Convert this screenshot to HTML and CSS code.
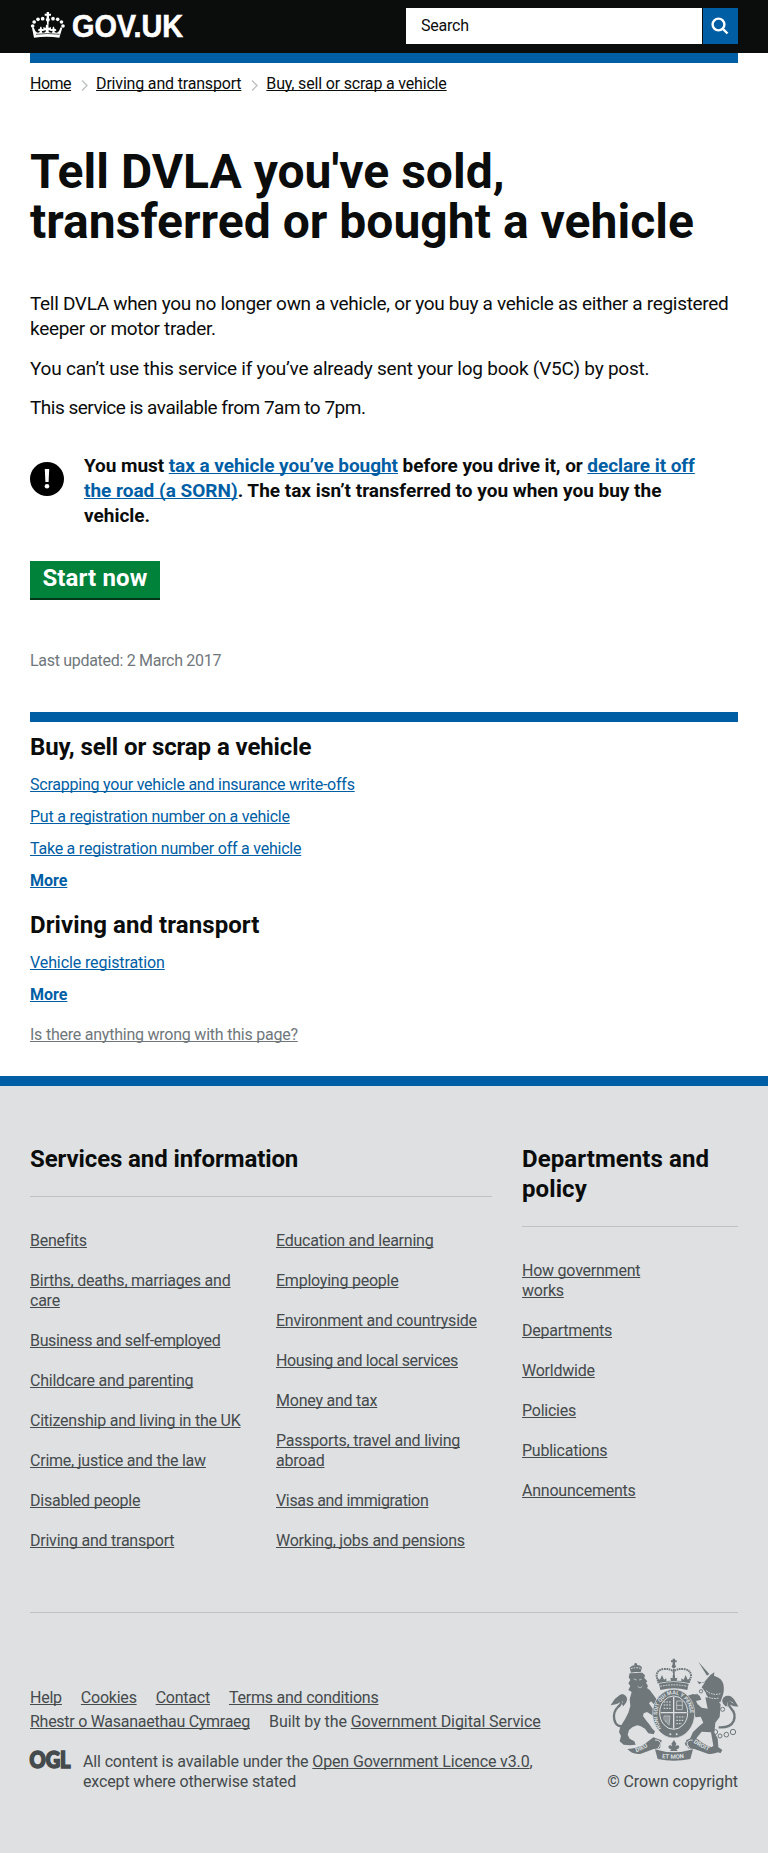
FILE: index.html
```html
<!DOCTYPE html>
<html lang="en">
<head>
<meta charset="utf-8">
<title>Tell DVLA you've sold, transferred or bought a vehicle - GOV.UK</title>
<link rel="stylesheet" href="styles.css">
</head>
<body>
<header class="header">
  <a class="logo" href="#">
    <svg class="crown" viewBox="6 12 106 78" fill="#fff">
      <path d="M55 12h7v5h6v6h-6v7h-7v-7h-6v-6h6z"/>
      <circle cx="58.500" cy="35" r="6"/><path d="M56 38h5v12h-5z"/>
      <circle cx="43" cy="32" r="5.500"/><circle cx="29" cy="34" r="5.500"/><circle cx="17.500" cy="42" r="5.500"/><circle cx="13" cy="54" r="5.500"/>
      <circle cx="74" cy="32" r="5.500"/><circle cx="88" cy="34" r="5.500"/><circle cx="99.500" cy="42" r="5.500"/><circle cx="104" cy="54" r="5.500"/>
      <path d="M11 59l5-1 5 11q5 7 12 4l2-5q-4 3-6-1 0-5 5-4l2-7 3 0 2 7q5-1 5 4-2 4-6 1l2 6q6 1 10-3v-5l-7 3v-12l7 3 1-10h7l1 10 7-3v12l-7-3v5q4 4 10 3l2-6q-4 3-6-1 0-5 5-4l2-7h3l2 7q5-1 5 4-2 4-6 1l2 5q7 3 12-4l5-11 5 1-9 30q-38-5-76 0z"/>
      <path d="M23 79q35-5 71 0" fill="none" stroke="#0b0c0c" stroke-width="2"/>
    </svg>
    <svg class="wordmark" viewBox="0 0 114 34"><text x="0" y="27" textLength="111" lengthAdjust="spacingAndGlyphs">GOV.UK</text></svg>
  </a>
  <form class="search">
    <span class="search-input">Search</span>
    <span class="search-button"><svg viewBox="0 0 18 18"><circle cx="7.500" cy="7.500" r="5.900"/><path d="M11.500 11.500l5 5"/></svg></span>
  </form>
</header>
<div class="wrap">
  <div class="bar"></div>
  <nav class="crumbs">
    <a href="#">Home</a>
    <svg viewBox="0 0 7 11"><path d="M1 .5l5 5-5 5"/></svg>
    <a href="#">Driving and transport</a>
    <svg viewBox="0 0 7 11"><path d="M1 .5l5 5-5 5"/></svg>
    <a href="#">Buy, sell or scrap a vehicle</a>
  </nav>
  <main>
    <h1>Tell DVLA you've sold,<br>transferred or bought a vehicle</h1>
    <div class="intro">
      <p>Tell DVLA when you no longer own a vehicle, or you buy a vehicle as either a registered keeper or motor trader.</p>
      <p class="restriction">You can’t use this service if you’ve already sent your log book (V5C) by post.</p>
      <p class="hours">This service is available from 7am to 7pm.</p>
    </div>
    <div class="warning">
      <svg viewBox="0 0 34 34"><circle cx="17" cy="17" r="17"/><path d="M14.800 7h4.400l-.6 13h-3.200z" fill="#fff"/><circle cx="17" cy="24.300" r="2.300" fill="#fff"/></svg>
      <p><span class="lead">You must <a href="#">tax a vehicle you’ve bought</a> before you drive it, or </span><a href="#"><span class="lead">declare it off</span><br>the road (a SORN)</a>. The tax isn’t transferred to you when you buy the<br>vehicle.</p>
    </div>
    <a class="start" href="#">Start now</a>
    <p class="updated">Last updated: 2 March 2017</p>
  </main>
  <aside class="related">
    <div class="bar"></div>
    <h2>Buy, sell or scrap a vehicle</h2>
    <ul>
      <li><a href="#">Scrapping your vehicle and insurance write-offs</a></li>
      <li><a href="#">Put a registration number on a vehicle</a></li>
      <li><a href="#">Take a registration number off a vehicle</a></li>
      <li class="more"><a href="#">More</a></li>
    </ul>
    <h2 class="loose">Driving and transport</h2>
    <ul>
      <li class="loose"><a href="#">Vehicle registration</a></li>
      <li class="more"><a href="#">More</a></li>
    </ul>
  </aside>
  <a class="report" href="#">Is there anything wrong with this page?</a>
</div>
<footer class="footer">
  <div class="columns">
    <section class="services">
      <h2>Services and information</h2>
      <div class="lists">
        <ul>
          <li><a href="#">Benefits</a></li>
          <li><a href="#">Births, deaths, marriages and<br>care</a></li>
          <li class="tight"><a href="#">Business and self-employed</a></li>
          <li><a href="#">Childcare and parenting</a></li>
          <li><a href="#">Citizenship and living in the UK</a></li>
          <li><a href="#">Crime, justice and the law</a></li>
          <li><a href="#">Disabled people</a></li>
          <li><a href="#">Driving and transport</a></li>
        </ul>
        <ul>
          <li><a href="#">Education and learning</a></li>
          <li><a href="#">Employing people</a></li>
          <li><a href="#">Environment and countryside</a></li>
          <li class="tight"><a href="#">Housing and local services</a></li>
          <li><a href="#">Money and tax</a></li>
          <li><a href="#">Passports, travel and living<br>abroad</a></li>
          <li class="tight"><a href="#">Visas and immigration</a></li>
          <li><a href="#">Working, jobs and pensions</a></li>
        </ul>
      </div>
    </section>
    <section class="departments">
      <h2 class="loose">Departments and<br>policy</h2>
      <ul>
        <li><a href="#">How government<br>works</a></li>
        <li><a href="#">Departments</a></li>
        <li><a href="#">Worldwide</a></li>
        <li><a href="#">Policies</a></li>
        <li><a href="#">Publications</a></li>
        <li><a href="#">Announcements</a></li>
      </ul>
    </section>
  </div>
  <div class="meta">
    <div class="meta-left">
      <div class="meta-row first"><a href="#">Help</a><a href="#">Cookies</a><a href="#">Contact</a><a href="#">Terms and conditions</a></div>
      <div class="meta-row second"><a href="#">Rhestr o Wasanaethau Cymraeg</a><span class="credit">Built by the <a href="#">Government Digital Service</a></span></div>
      <div class="licence">
        <svg class="ogl" viewBox="0 0 44 28"><text x="0.500" y="20.500" textLength="41" lengthAdjust="spacingAndGlyphs">OGL</text></svg>
        <p>All content is available under the <a href="#">Open Government Licence v3.0</a>,<br>except where otherwise stated</p>
      </div>
    </div>
    <div class="copyright">
      <svg class="crest" viewBox="13 16 378 309">
        <defs>
          <path id="garter" d="M162 229A49 62 0 1 1 234 229"/>
          <path id="left-scroll" d="M80 300Q110 292 142 268"/>
          <path id="right-scroll" d="M252 266Q284 290 320 301"/>
          <path id="mid-scroll" d="M154 314Q198 323 243 314"/>
        </defs>
        <g class="ink">
          <!-- crown -->
          <path d="M195 18h7v5h5v6h-5v8h-7v-8h-5v-6h5z"/><circle cx="198.500" cy="41" r="6"/>
          <path d="M153 92L147 72Q146 52 168 49Q188 47 197 57Q208 47 228 49Q251 52 250 72L243 92" class="beads"/>
          <path d="M196 48h5v27h-5z"/>
          <path d="M153 91l-4-15 8 5 6-14 6 14 7-4 0 8 14-1-2-9 7 2v-9h7v9l7-2-2 9 14 1 0-8 7 4 6-14 6 14 8-5-5 15q-43-10-90 0z"/>
          <path d="M154 93q44-10 89 0l-4 19q-40-10-81 0z"/>
          <path d="M158 101q40-9 81 0" class="cut dash"/>
          <!-- lion -->
          <path d="M70 60L66 45Q72 37 84 37Q98 36 103 44L99 59Q84 56 70 60Z"/><circle cx="84" cy="35" r="4"/><path d="M70 48q14-5 29-1" class="cut dash"/>
          <path d="M66 62L104 60L112 68L110 76L119 86L115 90L121 100L118 106L126 112L138 128L144 136L150 148L146 162L138 154L130 146L124 152L132 164L148 182L150 196L142 199L134 188L118 178L108 182L106 190L116 204L126 216L134 228L142 236L138 245L122 242L112 228L98 220L88 218L74 224L64 232L60 246L66 258L80 266L84 276L66 278L48 276L36 266L40 250L34 238L38 222L52 200L62 180L68 160L66 140L72 118L62 112L68 100L62 92L68 82L63 74Z"/>
          <path d="M78 79l9 3M94 82l8-2M90 101l7 5 7-5" class="cut fine"/>
          <path d="M45 157Q54 144 46 136Q33 130 22 144L16 153Q31 151 38 142Q45 151 31 163Q15 178 20 201Q26 227 54 220" class="tail"/>
          <path d="M22 147q6-20 23-23 20 8 10 26l-10 12q5-21-9-19z"/>
          <!-- unicorn -->
          <path d="M272 27l33 37-7 5zM288 90l20-23 12-8-1 10q24 7 28 25 4 19-2 35l-7 20-34-4-11-27-11-14 10-15-8-1-9 7-7-9z"/>
          <path d="M293 134l36 8 10 13-3 38-13 17-3 30 10 17 2 27 12 8-5 9-29-6-2-8 9-8-7-40-28-2-16 20-8 12-10 10h-14l-3-9 13-5 12-27 19-18 12-10-8-18-15 2-7-14 3-9-13-9-1-17-10-8 2-7 18-6 20 5 5 12-16 4 5 10 12 10 18 3z"/>
          <path d="M356 159Q342 147 351 136Q366 127 377 143L386 158Q373 158 365 148Q360 155 370 167Q386 183 378 205Q369 226 333 224" class="tail"/>
          <path d="M383 154q-6-18-25-25-18 8-9 25l11 9q-5-18 9-17z"/>
          <path d="M296 114q18 16 42 9M290 126q20 16 44 10" class="cut dash"/>
          <!-- scrolls -->
          <path d="M59 289q25 0 52-15l26-20 25 9-5 24-47 4q-22 18-51-2zM341 289q-27 0-55-17l-26-20-25 11 6 24 45 4q24 18 55-2z"/>
          <path d="M60 289q14 18 40 14l46-17q-9-15-4-24l-31 14q-18 13-51 13zM340 289q-14 18-40 14l-48-17q10-14 6-24l31 14q18 13 51 13z"/>
          <path d="M142 262q15 0 17 10-2 9-8 14M255 262q-15 0-17 10 2 9 8 14" class="cut"/>
          <path d="M142 290q56 18 114 0l-8 29q-50 10-98 0z"/>
          <path d="M199 262l7 11-3 8q8-7 12 1-1 9-9 7l4 6h-23l4-6q-8 2-9-7 4-8 12-1l-3-8z"/>
          <!-- garter and shield -->
          <ellipse cx="198" cy="183" rx="63" ry="73" stroke="#dee0e2" stroke-width="2"/>
          <ellipse cx="198" cy="180" rx="42" ry="50" class="cut"/>
          <path d="M198 132v96M159 180h78" class="cut cross"/>
          <path d="M168 148h22M168 157h22M168 167h22M206 193h25M206 203h23M206 213h17" class="cut dash"/>
          <path d="M207 145h17v26h-17zM169 190l18 0-3 27-15-17zM175 191v17M181 191v20M207 158h18" class="cut fine"/>
          <circle cx="188" cy="245" r="3" fill="#dee0e2"/><circle cx="207" cy="245" r="3" fill="#dee0e2"/>
        </g>
        <g class="beading"><circle cx="323" cy="238" r="7"/><circle cx="337" cy="250" r="6"/><circle cx="356" cy="246" r="7"/><circle cx="376" cy="238" r="8"/><circle cx="345" cy="170" r="6"/><circle cx="267" cy="130" r="5"/><circle cx="280" cy="116" r="5"/></g>
        <g class="motto">
          <text class="oath"><textPath href="#garter" startOffset="2">HONI SOIT QUI MAL Y PENSE</textPath></text>
          <text><textPath href="#left-scroll" startOffset="6">DIEU</textPath></text>
          <text><textPath href="#right-scroll" startOffset="6">DROIT</textPath></text>
          <text><textPath href="#mid-scroll" startOffset="9">ET MON</textPath></text>
        </g>
      </svg>
      <span>© Crown copyright</span>
    </div>
  </div>
</footer>
</body>
</html>
```
FILE: styles.css
```css
* { box-sizing: border-box; }
body {
  margin: 0;
  background: #fff;
  color: #0b0c0c;
  font: 16px/20px Roboto, "Liberation Sans", sans-serif;
  letter-spacing: -0.23px;
}
h1, h2, p, ul { margin: 0; padding: 0; }
ul { list-style: none; }
svg { display: block; flex: none; overflow: visible; }
a {
  color: #005ea5;
  text-decoration: underline;
  text-decoration-thickness: 1px;
  text-underline-offset: 1px;
  text-decoration-skip-ink: none;
}
h2 { font-size: 24px; line-height: 30px; font-weight: 700; letter-spacing: -0.1px; }
h2.loose { letter-spacing: 0.08px; }
li.loose { letter-spacing: -0.1px; }
li.tight { letter-spacing: -0.34px; }

.header {
  height: 53px;
  padding: 8px 30px 9px;
  background: #0b0c0c;
  display: flex;
  justify-content: space-between;
}
.logo { display: flex; gap: 6px; padding-top: 4px; }
.crown { width: 36px; height: 26px; }
.wordmark { width: 114px; height: 34px; margin-top: -2px; }
.wordmark text { font: 700 31px "Liberation Sans", sans-serif; fill: #fff; stroke: #fff; stroke-width: 0.6; letter-spacing: 0; }
.search { display: flex; gap: 1px; height: 36px; width: 332px; margin: 0; }
.search-input { flex: 1; background: #fff; padding: 8px 15px; }
.search-button { width: 35px; background: #005ea5; display: flex; align-items: center; justify-content: center; }
.search-button svg { width: 18px; height: 18px; margin-right: 1px; fill: none; stroke: #fff; stroke-width: 2.4; }

.wrap { padding: 0 30px; height: 1023px; }
.bar { height: 10px; background: #005ea5; }
.crumbs { display: flex; align-items: center; height: 20px; margin-top: 11px; letter-spacing: -0.18px; }
.crumbs a { color: #0b0c0c; }
.crumbs a:first-child { letter-spacing: -0.5px; }
.crumbs svg { width: 7px; height: 11px; margin: 2px 8px 0 10px; fill: none; stroke: #bfc1c3; stroke-width: 1.4; }

h1 { margin-top: 53px; font-size: 48px; line-height: 50px; font-weight: 700; letter-spacing: 0.02px; }
.intro { margin-top: 44px; display: grid; gap: 14.5px; font-size: 19px; line-height: 25px; letter-spacing: -0.31px; }
.intro p:first-child { margin-right: -5px; }
.intro .restriction { letter-spacing: -0.23px; }
.intro .hours { letter-spacing: -0.5px; }
.warning { display: flex; gap: 20px; margin-top: 33px; font-size: 19px; line-height: 25px; font-weight: 700; letter-spacing: 0; white-space: nowrap; }
.warning svg { width: 34px; height: 34px; margin-top: 9px; }
.lead { letter-spacing: -0.06px; }
.start {
  display: block;
  width: 130px;
  height: 39px;
  margin-top: 33px;
  padding-top: 2px;
  background: #00823b;
  border-bottom: 2px solid #003618;
  color: #fff;
  font-size: 24px;
  line-height: 30px;
  font-weight: 700;
  letter-spacing: 0.15px;
  text-align: center;
  text-decoration: none;
}
.updated { margin-top: 51px; color: #6f777b; letter-spacing: -0.3px; }

.related { margin-top: 41px; }
.related h2 { margin-top: 10px; }
.related ul { margin-top: 13px; display: grid; gap: 12px; }
.related ul + h2 { margin-top: 19px; }
.more { font-weight: 700; letter-spacing: 0; }
.report { display: inline-block; margin-top: 20px; color: #6f777b; }

.footer { height: 777px; padding: 58px 30px 0; background: #dee0e2; border-top: 10px solid #005ea5; }
.footer a, .meta { color: #454a4c; }
.columns { display: grid; grid-template-columns: 462px 216px; gap: 30px; height: 468px; }
.columns h2 { padding-bottom: 22px; margin-bottom: 34px; border-bottom: 1px solid #bfc1c3; }
.columns ul { display: grid; gap: 20px; align-content: start; }
.lists { display: grid; grid-template-columns: 216px 216px; gap: 30px; }
.meta { display: flex; justify-content: space-between; border-top: 1px solid #bfc1c3; padding-top: 45px; }
.meta-left { padding-top: 30px; white-space: nowrap; }
.meta-row { display: flex; height: 24px; gap: 19px; }
.second { letter-spacing: -0.27px; }
.credit { letter-spacing: -0.08px; }
.licence { display: flex; gap: 10px; margin-top: 16px; letter-spacing: -0.14px; }
.ogl { width: 44px; height: 28px; margin: -5px 0 0 -1px; }
.ogl text { font: 900 22px Lato, sans-serif; fill: #454a4c; stroke: #454a4c; stroke-width: 1.6; letter-spacing: 0; }
.copyright { display: flex; flex-direction: column; align-items: flex-end; letter-spacing: -0.1px; white-space: nowrap; }
.crest { width: 126px; height: 103px; margin-bottom: 11px; }
.ink, .motto { fill: #6f777b; }
.tail { fill: none; stroke: #6f777b; stroke-width: 7; }
.beads { fill: none; stroke: #6f777b; stroke-width: 6; stroke-dasharray: 5 2; }
.cut { fill: none; stroke: #dee0e2; stroke-width: 3; }
.fine { stroke-width: 2; }
.cross { stroke-width: 4; }
.dash { stroke-dasharray: 5 3; }
.beading { fill: none; stroke: #6f777b; stroke-width: 3; }
.motto text { font: 700 18px Roboto, sans-serif; fill: #dee0e2; letter-spacing: 0; }
.motto .oath { font-size: 16px; }
```
